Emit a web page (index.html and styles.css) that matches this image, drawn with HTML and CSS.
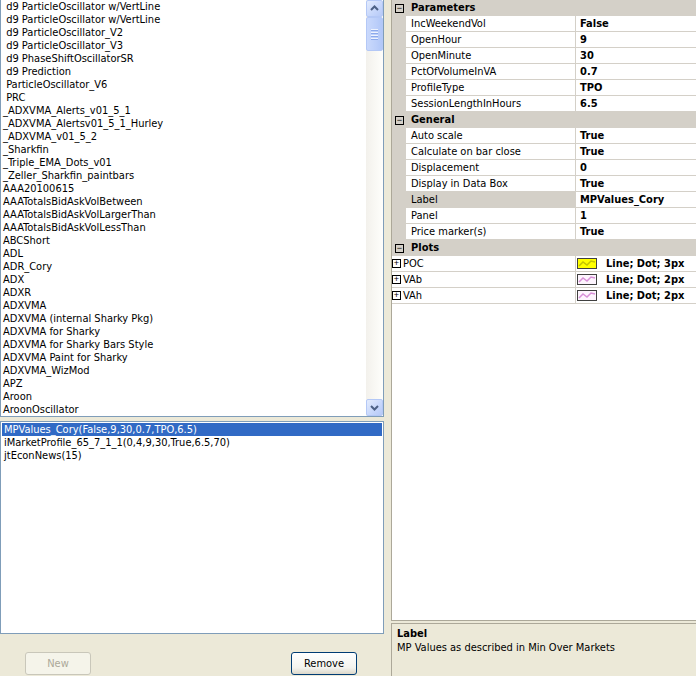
FILE: index.html
```
<!DOCTYPE html>
<html lang="en">
<head>
    <meta charset="UTF-8">
    <title>Indicators</title>
    <link rel="stylesheet" href="styles.css">
</head>
<body>
    <div class="dialog">
        <div class="left-pane">
            <div class="listbox available">
                <ul class="items">
                    <li> d9 ParticleOscillator w/VertLine</li>
                    <li> d9 ParticleOscillator w/VertLine</li>
                    <li> d9 ParticleOscillator_V2</li>
                    <li> d9 ParticleOscillator_V3</li>
                    <li> d9 PhaseShiftOscillatorSR</li>
                    <li> d9 Prediction</li>
                    <li> ParticleOscillator_V6</li>
                    <li> PRC</li>
                    <li>_ADXVMA_Alerts_v01_5_1</li>
                    <li>_ADXVMA_Alertsv01_5_1_Hurley</li>
                    <li>_ADXVMA_v01_5_2</li>
                    <li>_Sharkfin</li>
                    <li>_Triple_EMA_Dots_v01</li>
                    <li>_Zeller_Sharkfin_paintbars</li>
                    <li>AAA20100615</li>
                    <li>AAATotalsBidAskVolBetween</li>
                    <li>AAATotalsBidAskVolLargerThan</li>
                    <li>AAATotalsBidAskVolLessThan</li>
                    <li>ABCShort</li>
                    <li>ADL</li>
                    <li>ADR_Cory</li>
                    <li>ADX</li>
                    <li>ADXR</li>
                    <li>ADXVMA</li>
                    <li>ADXVMA (internal Sharky Pkg)</li>
                    <li>ADXVMA for Sharky</li>
                    <li>ADXVMA for Sharky Bars Style</li>
                    <li>ADXVMA Paint for Sharky</li>
                    <li>ADXVMA_WizMod</li>
                    <li>APZ</li>
                    <li>Aroon</li>
                    <li>AroonOscillator</li>
                </ul>
                <div class="scrollbar">
                    <div class="sb-btn">
                        <svg width="15" height="15" viewBox="0 0 15 15"><polyline points="4,9 7.5,5.5 11,9" fill="none" stroke="#4d6185" stroke-width="2"/></svg>
                    </div>
                    <div class="sb-thumb">
                        <span class="grip"></span>
                        <span class="grip"></span>
                        <span class="grip"></span>
                        <span class="grip"></span>
                    </div>
                    <div class="sb-track"></div>
                    <div class="sb-btn">
                        <svg width="15" height="15" viewBox="0 0 15 15"><polyline points="4,6 7.5,9.5 11,6" fill="none" stroke="#4d6185" stroke-width="2"/></svg>
                    </div>
                </div>
            </div>

            <div class="listbox applied">
                <ul class="items">
                    <li class="selected">MPValues_Cory(False,9,30,0.7,TPO,6.5)</li>
                    <li>iMarketProfile_65_7_1_1(0,4,9,30,True,6.5,70)</li>
                    <li>jtEconNews(15)</li>
                </ul>
            </div>

            <div class="buttons">
                <button class="btn new" disabled>New</button>
                <button class="btn remove">Remove</button>
            </div>
        </div>

        <div class="right-pane">
            <div class="prop-grid">
                <div class="category"><span class="toggle">&minus;</span>Parameters</div>
                <div class="prop"><span class="gutter"></span><span class="name">IncWeekendVol</span><span class="value">False</span></div>
                <div class="prop"><span class="gutter"></span><span class="name">OpenHour</span><span class="value">9</span></div>
                <div class="prop"><span class="gutter"></span><span class="name">OpenMinute</span><span class="value">30</span></div>
                <div class="prop"><span class="gutter"></span><span class="name">PctOfVolumeInVA</span><span class="value">0.7</span></div>
                <div class="prop"><span class="gutter"></span><span class="name">ProfileType</span><span class="value">TPO</span></div>
                <div class="prop"><span class="gutter"></span><span class="name">SessionLengthInHours</span><span class="value">6.5</span></div>

                <div class="category"><span class="toggle">&minus;</span>General</div>
                <div class="prop"><span class="gutter"></span><span class="name">Auto scale</span><span class="value">True</span></div>
                <div class="prop"><span class="gutter"></span><span class="name">Calculate on bar close</span><span class="value">True</span></div>
                <div class="prop"><span class="gutter"></span><span class="name">Displacement</span><span class="value">0</span></div>
                <div class="prop"><span class="gutter"></span><span class="name">Display in Data Box</span><span class="value">True</span></div>
                <div class="prop active"><span class="gutter"></span><span class="name">Label</span><span class="value">MPValues_Cory</span></div>
                <div class="prop"><span class="gutter"></span><span class="name">Panel</span><span class="value">1</span></div>
                <div class="prop"><span class="gutter"></span><span class="name">Price marker(s)</span><span class="value">True</span></div>

                <div class="category"><span class="toggle">&minus;</span>Plots</div>
                <div class="prop plot">
                    <span class="name"><span class="toggle small">+</span>POC</span>
                    <span class="value">
                        <svg class="swatch" width="20" height="11" viewBox="0 0 20 11"><rect x="0.5" y="0.5" width="19" height="10" fill="#ffff00" stroke="#404040"/><polyline points="2,8 6,4 10,7 14,3 18,4" fill="none" stroke="#c4c400" stroke-width="1.5"/></svg>
                        Line; Dot; 3px
                    </span>
                </div>
                <div class="prop plot">
                    <span class="name"><span class="toggle small">+</span>VAb</span>
                    <span class="value">
                        <svg class="swatch" width="20" height="11" viewBox="0 0 20 11"><rect x="0.5" y="0.5" width="19" height="10" fill="#fdf4fd" stroke="#404040"/><polyline points="2,8 6,4 10,7 14,3 18,4" fill="none" stroke="#d890d8" stroke-width="1.5"/></svg>
                        Line; Dot; 2px
                    </span>
                </div>
                <div class="prop plot">
                    <span class="name"><span class="toggle small">+</span>VAh</span>
                    <span class="value">
                        <svg class="swatch" width="20" height="11" viewBox="0 0 20 11"><rect x="0.5" y="0.5" width="19" height="10" fill="#fdf4fd" stroke="#404040"/><polyline points="2,8 6,4 10,7 14,3 18,4" fill="none" stroke="#d890d8" stroke-width="1.5"/></svg>
                        Line; Dot; 2px
                    </span>
                </div>
            </div>

            <div class="description">
                <div class="desc-title">Label</div>
                <div class="desc-text">MP Values as described in Min Over Markets</div>
            </div>
        </div>
    </div>
</body>
</html>
```

FILE: styles.css
```
* {
    margin: 0;
    padding: 0;
    box-sizing: border-box;
}

body {
    font-family: 'DejaVu Sans Condensed', 'Liberation Sans', Arial, sans-serif;
    font-size: 11px;
    background: #ece9d8;
    color: #000;
    overflow: hidden;
}

.dialog {
    display: flex;
    width: 696px;
    height: 676px;
}

/* left side: lists + buttons */

.left-pane {
    width: 384px;
    display: flex;
    flex-direction: column;
}

.listbox {
    background: #fff;
    border: 1px solid #7f9db9;
    display: flex;
}

.listbox.available {
    border-top: none;
    height: 417px;
}

.listbox.applied {
    margin-top: 4px;
    height: 213px;
    padding: 1px;
}

.items {
    list-style: none;
    flex: 1;
    overflow: hidden;
}

.items li {
    height: 13px;
    line-height: 13px;
    padding-left: 2px;
    white-space: pre;
}

.applied .items li {
    padding-left: 2px;
}

.items li.selected {
    background: #316ac5;
    color: #fff;
}

.scrollbar {
    width: 17px;
    display: flex;
    flex-direction: column;
    background: linear-gradient(90deg, #f3f1ec, #fefefb);
}

.sb-btn {
    height: 17px;
    border: 1px solid #b4c8f6;
    border-radius: 2px;
    background: linear-gradient(135deg, #e4ecfd 0%, #c6d6fb 60%, #b6c9f7 100%);
    display: flex;
    align-items: center;
    justify-content: center;
}

.sb-thumb {
    height: 34px;
    border: 1px solid #b4c8f6;
    border-radius: 2px;
    background: linear-gradient(90deg, #cad9fc, #bccffa 60%, #b1c7f8);
    display: flex;
    flex-direction: column;
    align-items: center;
    justify-content: center;
    gap: 1px;
}

.grip {
    width: 7px;
    height: 1px;
    background: #eef3fe;
    box-shadow: 0 1px 0 #8caaeb;
    margin-bottom: 1px;
}

.sb-track {
    flex: 1;
}

.buttons {
    display: flex;
    margin-top: 18px;
    padding-left: 25px;
}

.btn {
    width: 66px;
    height: 23px;
    font-family: inherit;
    font-size: 11px;
    border-radius: 3px;
}

.btn.new {
    border: 1px solid #c9c7ba;
    background: #f5f4ea;
    color: #aca899;
}

.btn.remove {
    margin-left: 200px;
    border: 1px solid #003c74;
    background: linear-gradient(#ffffff, #f3f3ee 70%, #dcd8ca);
    color: #000;
}

/* right side: property grid */

.right-pane {
    margin-left: 7px;
    flex: 1;
    display: flex;
    flex-direction: column;
}

.prop-grid {
    height: 621px;
    background: #fff;
    border-left: 1px solid #aca899;
    border-bottom: 1px solid #aca899;
}

.category {
    height: 16px;
    line-height: 16px;
    background: #d4d0c8;
    font-weight: bold;
    display: flex;
    align-items: center;
}

.toggle {
    width: 9px;
    height: 9px;
    border: 1px solid #000;
    font-size: 9px;
    line-height: 7px;
    text-align: center;
    font-weight: normal;
    font-family: 'Liberation Sans', sans-serif;
    margin-left: 3px;
    margin-right: 7px;
    flex: none;
}

.toggle.small {
    background: #fff;
    margin-left: 0;
    margin-right: 2px;
    display: inline-block;
}

.prop {
    display: grid;
    grid-template-columns: 14px 170px 1fr;
    height: 16px;
}

.prop.plot {
    grid-template-columns: 184px 1fr;
}

.gutter {
    background: #d4d0c8;
}

.name,
.value {
    border-bottom: 1px solid #d4d0c8;
    line-height: 15px;
    white-space: nowrap;
    overflow: hidden;
}

.name {
    border-right: 1px solid #d4d0c8;
    padding-left: 5px;
}

.plot .name {
    padding-left: 0;
    display: flex;
    align-items: center;
}

.value {
    padding-left: 4px;
    font-weight: bold;
}

.plot .value {
    padding-left: 1px;
    display: flex;
    align-items: center;
    gap: 9px;
}

.prop.active .name {
    background: #d4d0c8;
}

.description {
    margin-top: 2px;
    flex: 1;
    border-left: 1px solid #aca899;
    border-top: 1px solid #aca899;
    padding: 3px 5px;
}

.desc-title {
    font-weight: bold;
    line-height: 13px;
}

.desc-text {
    line-height: 15px;
}
```
